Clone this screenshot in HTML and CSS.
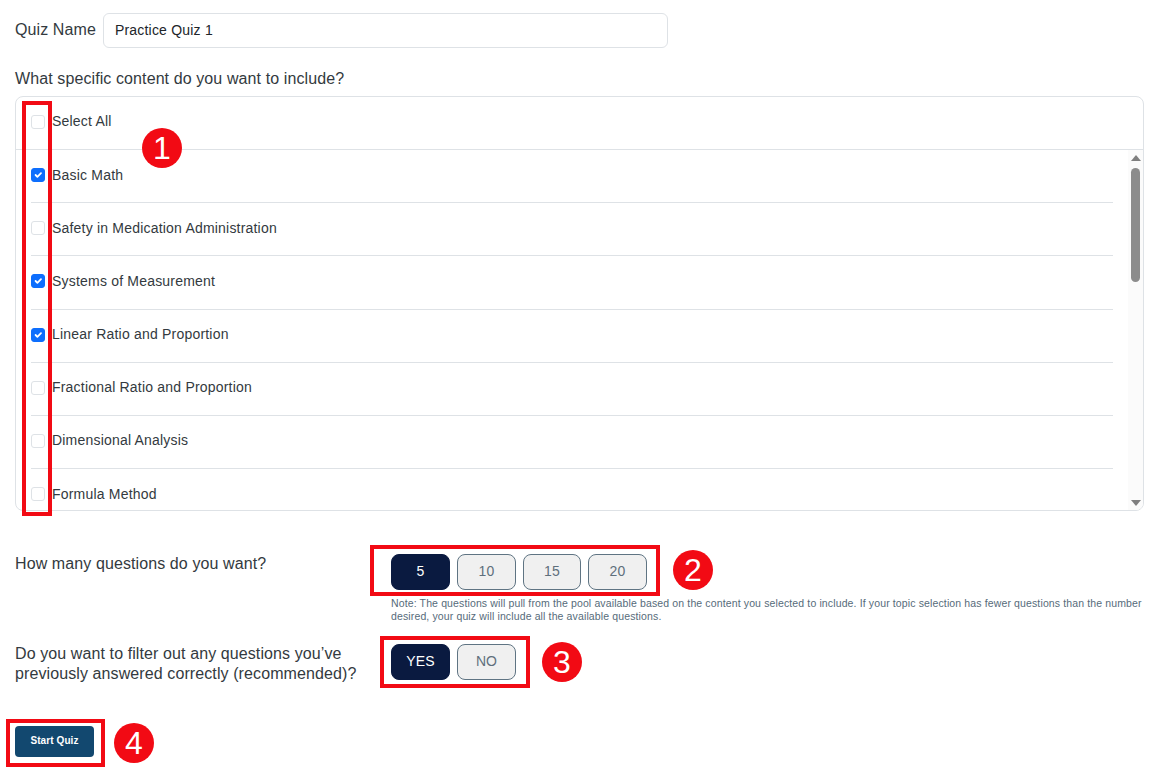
FILE: index.html
```html
<!DOCTYPE html>
<html lang="en">
<head>
<meta charset="UTF-8">
<meta name="viewport" content="width=device-width, initial-scale=1.0">
<title>Create Quiz</title>
<link rel="stylesheet" href="styles.css">
</head>
<body>

<form class="quiz-form">
    <div class="name-row">
        <label for="quizName">Quiz Name</label>
        <input class="name-input" type="text" id="quizName" value="Practice Quiz 1">
    </div>

    <p class="content-label">What specific content do you want to include?</p>

    <div class="content-box">
        <label class="select-all">
            <input class="check" type="checkbox">
            <span>Select All</span>
        </label>
        <div class="list-wrap">
            <div class="topic-list">
                <label class="topic"><input class="check" type="checkbox" checked><span>Basic Math</span></label>
                <label class="topic"><input class="check" type="checkbox"><span>Safety in Medication Administration</span></label>
                <label class="topic"><input class="check" type="checkbox" checked><span>Systems of Measurement</span></label>
                <label class="topic"><input class="check" type="checkbox" checked><span>Linear Ratio and Proportion</span></label>
                <label class="topic"><input class="check" type="checkbox"><span>Fractional Ratio and Proportion</span></label>
                <label class="topic"><input class="check" type="checkbox"><span>Dimensional Analysis</span></label>
                <label class="topic"><input class="check" type="checkbox"><span>Formula Method</span></label>
            </div>
            <div class="scrollbar">
                <span class="arrow-up"></span>
                <span class="thumb"></span>
                <span class="arrow-down"></span>
            </div>
        </div>
    </div>

    <div class="question count-question">
        <p class="question-text">How many questions do you want?</p>
        <div>
            <div class="options">
                <button class="option active" type="button">5</button>
                <button class="option" type="button">10</button>
                <button class="option narrow" type="button">15</button>
                <button class="option" type="button">20</button>
            </div>
            <p class="note">Note: The questions will pull from the pool available based on the content you selected to include. If your topic selection has fewer questions than the number desired, your quiz will include all the available questions.</p>
        </div>
    </div>

    <div class="question filter-question">
        <p class="question-text">Do you want to filter out any questions you’ve<br>previously answered correctly (recommended)?</p>
        <div class="options">
            <button class="option active" type="button">YES</button>
            <button class="option" type="button">NO</button>
        </div>
    </div>

    <button class="start-btn" type="button">Start Quiz</button>
</form>

<!-- annotations drawn over the screenshot -->
<div class="callout box-1"></div>
<div class="callout box-2"></div>
<div class="callout box-3"></div>
<div class="callout box-4"></div>
<div class="badge badge-1">1</div>
<div class="badge badge-2">2</div>
<div class="badge badge-3">3</div>
<div class="badge badge-4">4</div>

</body>
</html>
```

FILE: styles.css
```css
* {
    box-sizing: border-box;
}

html, body {
    height: 100%;
}

body {
    position: relative;
    margin: 0;
    overflow: hidden;
    background-color: #ffffff;
    color: #333a40;
    font-family: "Liberation Sans", Arial, sans-serif;
    letter-spacing: 0.1px;
}

.quiz-form {
    padding: 13px 15px 0;
}

.name-row {
    display: flex;
    align-items: center;
    gap: 7px;
    font-size: 16px;
}

.name-row label {
    padding-bottom: 2px;
}

.name-input {
    width: 565px;
    height: 35px;
    padding: 0 11px 2px;
    border: 1px solid #dee2e6;
    border-radius: 6px;
    color: #212529;
    font-family: inherit;
    font-size: 14px;
    letter-spacing: 0.2px;
}

.content-label {
    margin: 22px 0 8px;
    font-size: 16px;
    line-height: 18px;
}

.content-box {
    height: 415px;
    border: 1px solid #dee2e6;
    border-radius: 8px;
    overflow: hidden;
    font-size: 14px;
    letter-spacing: 0.2px;
}

.select-all {
    display: flex;
    align-items: flex-start;
    gap: 7px;
    height: 53px;
    padding: 17px 15px 0;
    border-bottom: 1px solid #dee2e6;
}

.select-all span {
    margin-top: -1px;
}

.list-wrap {
    display: flex;
    height: 360px;
}

.topic-list {
    flex: 1;
    padding: 0 15px;
    overflow: hidden;
}

.topic {
    display: flex;
    align-items: flex-start;
    gap: 7px;
    height: 53.2px;
    padding-top: 17px;
    border-bottom: 1px solid #dee2e6;
}

.topic span {
    margin-top: -0.5px;
}

.topic .check {
    margin-top: 1.1px;
}

.topic:last-child {
    border-bottom: none;
}

.check {
    flex: none;
    width: 14px;
    height: 14px;
    margin: 1px 0 0;
    border: 1px solid #dee2e6;
    border-radius: 3px;
    background-color: #ffffff;
    appearance: none;
}

.check:checked {
    border-color: #0d6efd;
    background-color: #0d6efd;
    background-image: url("data:image/svg+xml,%3csvg xmlns='http://www.w3.org/2000/svg' viewBox='0 0 20 20'%3e%3cpath fill='none' stroke='%23fff' stroke-linecap='round' stroke-linejoin='round' stroke-width='3' d='m6 10 3 3 6-6'/%3e%3c/svg%3e");
    background-position: center;
    background-size: 100% 100%;
}

.scrollbar {
    display: flex;
    flex: none;
    flex-direction: column;
    align-items: center;
    width: 15px;
    background-color: #fbfbfb;
}

.arrow-up, .arrow-down {
    width: 0;
    height: 0;
    border-right: 5px solid transparent;
    border-left: 5px solid transparent;
}

.arrow-up {
    margin-top: 5px;
    border-bottom: 6px solid #7f7f7f;
}

.arrow-down {
    margin-top: auto;
    margin-bottom: 4px;
    border-top: 6px solid #7f7f7f;
}

.thumb {
    width: 9px;
    height: 114px;
    margin-top: 7px;
    border-radius: 5px;
    background-color: #8c8c8c;
}

.question {
    display: flex;
}

.question-text {
    flex: none;
    width: 376px;
    margin: 0;
    font-size: 16px;
    line-height: 20px;
}

.count-question {
    margin-top: 43px;
}

.filter-question {
    margin-top: 21px;
}

.options {
    display: flex;
    gap: 7px;
}

.option {
    width: 59px;
    height: 36px;
    padding: 0 0 2px;
    border: 1px solid #5f7483;
    border-radius: 8px;
    background-color: #f0f0f0;
    color: #5f6f7c;
    font-family: inherit;
    font-size: 14px;
    letter-spacing: 0.1px;
}

.option.narrow {
    width: 58px;
}

.option.active {
    border-color: #0a1a40;
    background-color: #0a1a40;
    color: #ffffff;
}

.note {
    width: 758px;
    margin: 7px 0 0;
    color: #566b7a;
    font-size: 10.5px;
    letter-spacing: 0.13px;
    line-height: 13px;
}

.start-btn {
    display: block;
    width: 79px;
    height: 31px;
    margin-top: 42px;
    padding: 0 0 2px;
    border: none;
    border-radius: 4px;
    background-color: #12486f;
    color: #ffffff;
    font-family: inherit;
    font-size: 10px;
    font-weight: bold;
    letter-spacing: 0.1px;
}

.callout {
    position: absolute;
    border: 4px solid #f20a14;
}

.box-1 { left: 22px; top: 101px; width: 30px; height: 415px; }
.box-2 { left: 370px; top: 545px; width: 290px; height: 51px; }
.box-3 { left: 380px; top: 636px; width: 150px; height: 52px; }
.box-4 { left: 6px; top: 719px; width: 99px; height: 48px; }

.badge {
    position: absolute;
    width: 40px;
    height: 40px;
    border-radius: 50%;
    background-color: #f20a14;
    color: #ffffff;
    font-size: 32px;
    line-height: 40px;
    text-align: center;
}

.badge-1 { left: 142px; top: 128px; }
.badge-2 { left: 673px; top: 550px; }
.badge-3 { left: 542px; top: 642px; }
.badge-4 { left: 114px; top: 723px; }
```
